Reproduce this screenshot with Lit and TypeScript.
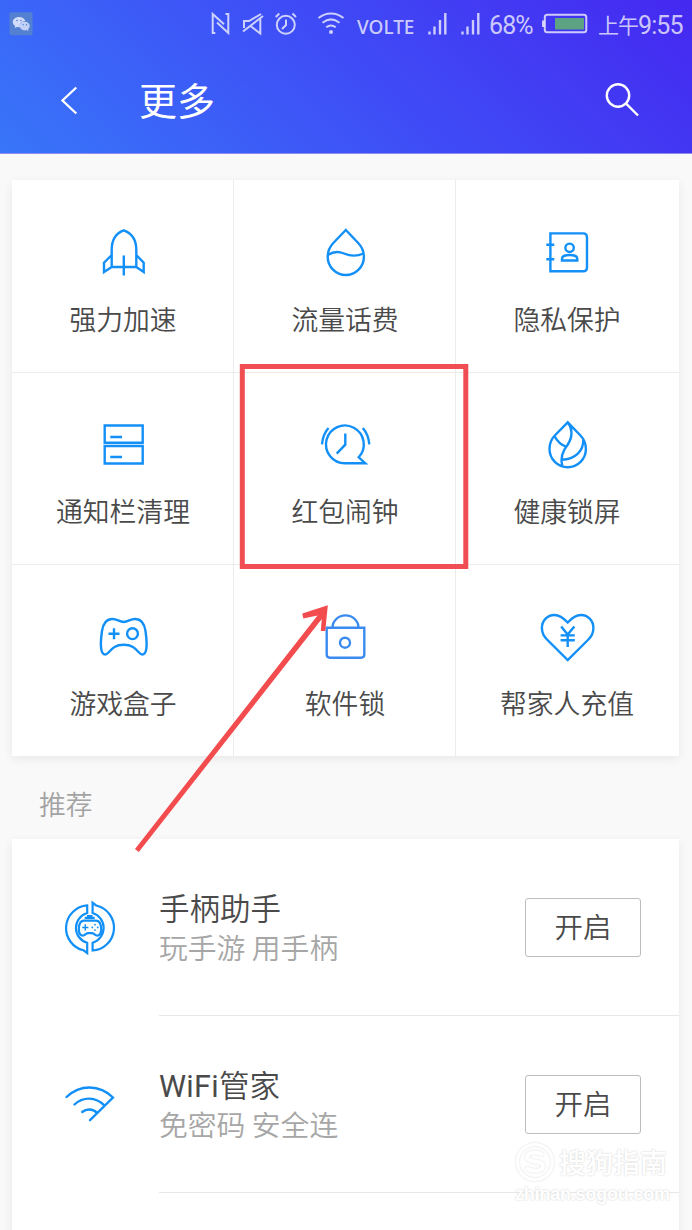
import { LitElement, html, css, svg } from "lit";
import { customElement, property } from "lit/decorators.js";

const icons: Record<string, { box: string; art: unknown }> = {
  rocket: {
    box: "93 222 60 60",
    art: svg`<path d="M111.700 267V250C111.700 240 116 233 123.700 230.300C131.500 233 136.300 240 136.300 250V267Z M123.800 255.500V275.500 M111.700 255L104 262.700V272L111.700 267 M136.300 255L143.700 262.700V272L136.300 267"/>`,
  },
  drop: {
    box: "315 222 60 60",
    art: svg`<path d="M345.800 230L333.300 243C329.500 247 327.700 251.500 327.700 256.700A18.100 18.400 0 0 0 363.900 256.700C363.900 251.500 362 247 358.200 243Z M328 255C333 251.500 338.500 251.200 344 253.500C350 256 356 256.800 363.500 253.500"/>`,
  },
  book: {
    box: "537 222 60 60",
    art: svg`<path d="M550.400 233.400H583Q587 233.400 587 237.400V267.300Q587 271.300 583 271.300H550.400Z M546.300 244.700H554.300 M546.300 259.300H554.300 M562 260.500V258.800C562 256.500 565 255 569.600 255S577.300 256.500 577.300 258.800V260.500Z"/><circle cx="569.600" cy="247.800" r="4.200"/>`,
  },
  drawers: {
    box: "93 414 60 60",
    art: svg`<path d="M104.700 425.500H142.700V442.800H104.700Z M104.700 446H142.700V463.500H104.700Z M110.300 437H122 M110.300 457H122"/>`,
  },
  alarm: {
    box: "315 414 60 60",
    art: svg`<path d="M345.300 463.300H365.300L358.700 457.300A18.900 18.900 0 1 0 345.300 463.300Z M345.300 433.500V444.700L336.700 453.700 M328.500 428Q322.800 434.500 322 444.300 M362.800 428Q368.500 434.500 369.300 444.300"/>`,
  },
  leaf: {
    box: "537 414 60 60",
    art: svg`<path d="M567.700 422.300L554.800 435.500C551 439.500 549.500 444 549.500 449A18.200 18.200 0 0 0 585.900 449C585.900 444 584.300 439.500 580.500 435.500Z M567.700 422.300C572 427.500 573.500 436 567.500 445C562 451.500 560.500 459 562.300 466.300 M554.500 436C557.500 442 561 445 566.500 446.800 M562 459.700C574.500 459.500 584 451.500 583.300 438.800"/>`,
  },
  gamepad: {
    box: "93 606 60 60",
    art: svg`<path d="M111.500 619C116.500 618.300 119 622 123.700 622S131 618.300 136 619C142 619.500 144.500 624 145.500 631C146.300 637 147 641.500 146.500 647C146 654.500 142.500 656.300 139 652.500C135 648 132 644.800 123.700 644.800S112.500 648 108.500 652.500C105 656.300 101.500 654.500 101 647C100.500 641.500 101.200 637 102 631C103 624 105.500 619.500 111.500 619Z M108.500 633.700H119.500 M114 628.200V639.200"/><circle cx="132.500" cy="633.700" r="5.400"/>`,
  },
  lock: {
    box: "315 606 60 60",
    art: svg`<path d="M326.700 627.700H364.300V654.500Q364.300 657.700 361.100 657.700H329.900Q326.700 657.700 326.700 654.500Z M332.500 627.700A13 12.300 0 0 1 358.500 627.700"/><circle cx="345" cy="642.700" r="5"/>`,
  },
  heart: {
    box: "537 606 60 60",
    art: svg`<path d="M567.700 622.500C563 617.500 559 615 554.500 615C547 615 541.900 621 541.900 628C541.900 632.500 543.500 636 547 639.500L567.700 660L588.400 639.500C592 636 593.400 632.500 593.400 628C593.400 621 588.400 615 580.800 615C576.300 615 572.400 617.500 567.700 622.500Z M561.200 626.500L567.700 634.500L574.300 626.500 M567.700 634.500V647 M560.600 635.400H574.800 M560.600 640.200H574.800"/>`,
  },
  handle: {
    box: "60 898.500 60 60",
    art: svg`<g stroke-width="2.200"><path d="M87.200 905.900V913.500A15.500 15.500 0 0 0 87.200 943.300V953.500L83.500 950.800A22.800 22.800 0 0 1 87.200 905.900Z M92.600 951V943.200A15.500 15.500 0 0 0 92.600 913.500V903.300L96.200 906A22.800 22.800 0 0 1 92.600 951Z"/><path d="M84 921.200H96C99.500 921.200 101 925 101.200 929.500C101.300 934.500 98.800 937 96 935.700C94 934.700 93.500 933.700 92 933.700H88C86.500 933.700 86 934.700 84 935.700C81.200 937 78.700 934.500 78.800 929.500C79 925 80.500 921.200 84 921.200Z"/><path stroke-width="1.500" d="M85.300 924.800V931 M82.200 927.900H88.400"/><path stroke-width="2.200" d="M84.700 918.400H94.700 M87 916.700H92.500"/></g><g fill="currentColor" stroke="none"><circle cx="95" cy="925.200" r=".9"/><circle cx="95" cy="930.600" r=".9"/><circle cx="92.300" cy="927.900" r=".9"/><circle cx="97.700" cy="927.900" r=".9"/></g>`,
  },
  wifi: {
    box: "60 1075.500 60 60",
    art: svg`<path stroke-linecap="round" d="M66.500 1097.500C80 1084.700 99.500 1084.700 113 1098L90 1120.700 M74.500 1105C83 1097 95.500 1097 104.500 1106 M82.200 1112.500C86.500 1109 92.500 1109 97 1113.300"/>`,
  },
};

const statusArt = {
  nfc: svg`<path d="M215.300 33H212.700V14L224 24.300 M217 22.500L228.300 33V14H225.500"/>`,
  mute: svg`<path d="M244 28V21H249L261 14 M250.500 26L260.300 33.500V17.500 M243 31.500L263 16"/>`,
  clock: svg`<circle cx="285.800" cy="24.800" r="9"/><path d="M286 19.500V25L282 29 M275.800 17L279.300 13.500 M296 17L292.500 13.500"/>`,
  wifi: svg`<path d="M318.500 18C326 12 336 12 343.500 18 M322.500 22.800C328 18.400 334 18.400 339.500 22.800 M326.200 27.300C329.500 24.800 332.500 24.800 335.800 27.300"/><circle cx="331" cy="32" r="2" fill="currentColor" stroke="none"/>`,
  signal: svg`<path stroke-width="2.400" d="M462.500 31.500V34.500 M467.500 26.500V34.500 M473 20V34.500 M478.300 13V34.500"/>`,
  battery: svg`<rect x="544.800" y="14.800" width="41.500" height="17.400" rx="2.500"/><path stroke-width="2.500" d="M543.200 20.500V27"/><rect x="555" y="18" width="29" height="11.500" fill="#5ca283" stroke="none"/>`,
};

@customElement("line-icon")
class LineIcon extends LitElement {
  static styles = css`
    :host { display: block; width: 60px; height: 60px; color: #1290f8; }
    :host([name="lock"]) { color: #3a8aef; }
    svg { display: block; }
  `;
  @property({ reflect: true }) name = "rocket";
  render() {
    const icon = icons[this.name];
    return html`<svg width="60" height="60" viewBox=${icon.box} fill="none" stroke="currentColor" stroke-width="2.400">${icon.art}</svg>`;
  }
}

@customElement("status-bar")
class StatusBar extends LitElement {
  static styles = css`
    :host { display: block; height: 47px; color: rgba(255, 255, 255, 0.74); font-weight: 400; }
    .bar {
      display: grid; height: 47px; align-items: start; white-space: nowrap;
      grid-template-columns: 211px 30px 33px 43px 40px 70px 33px 29px 53px 56px 1fr;
      font-family: Roboto, "Noto Sans CJK SC", sans-serif;
    }
    svg { display: block; }
    .app { padding: 12px 0 0 9px; }
    .volte { font: 500 19px/24px "Noto Sans", sans-serif; padding-top: 15px; }
    .pct { font-size: 25px; line-height: 30px; padding-top: 11px; letter-spacing: -0.9px; }
    .time { font-size: 25px; line-height: 30px; padding-top: 11px; letter-spacing: -0.9px; display: flex; }
    .cn { font-size: 21px; letter-spacing: -1px; }
  `;
  icon(art: unknown, x: number, w: number) {
    return html`<svg width=${w} height="47" viewBox="${x} 0 ${w} 47" fill="none" stroke="currentColor" stroke-width="2">${art}</svg>`;
  }
  render() {
    return html`<div class="bar">
      <div class="app">
        <svg width="24" height="24" viewBox="9 12 24 24">
          <rect x="9.500" y="12.300" width="23" height="23" rx="2" fill="#5480d2"/>
          <path d="M19 17C15.500 17 12.800 19.200 12.800 22C12.800 23.700 13.700 25 15.200 26L14.700 28L17 26.900L20 27.200C19.300 23.500 21.500 21.500 25.300 21C24.500 18.500 22 17 19 17Z" fill="#d2dcfb"/>
          <path d="M24.800 21.800C21.900 21.800 19.800 23.700 19.800 26.100S21.900 30.400 24.800 30.400L26.500 30.100L28.500 31.200L28 29.300C29.100 28.500 29.700 27.400 29.700 26.100C29.700 23.700 27.600 21.800 24.800 21.800Z" fill="#c3d0f7"/>
          <g fill="#5480d2"><circle cx="17" cy="20.500" r=".8"/><circle cx="21" cy="20.500" r=".8"/><circle cx="23.200" cy="24.800" r=".7"/><circle cx="26.500" cy="24.800" r=".7"/></g>
        </svg>
      </div>
      ${this.icon(statusArt.nfc, 211, 20)}
      ${this.icon(statusArt.mute, 241, 25)}
      ${this.icon(statusArt.clock, 274, 25)}
      ${this.icon(statusArt.wifi, 317, 29)}
      <div class="volte">VOLTE</div>
      ${this.icon(statusArt.signal, 460, 22)}
      ${this.icon(statusArt.signal, 460, 22)}
      <div class="pct">68%</div>
      ${this.icon(statusArt.battery, 542, 46)}
      <div class="time"><span class="cn">上午</span><span>9:55</span></div>
    </div>`;
  }
}

@customElement("app-root")
class AppRoot extends LitElement {
  static styles = css`
    :host {
      display: block; position: relative; width: 692px; height: 1230px; overflow: hidden;
      background: #f9f9f9; color: #4a4a4a;
      font-family: "Noto Sans CJK SC", sans-serif; font-weight: 350;
    }
    * { box-sizing: border-box; }
    header {
      height: 154px; color: #fff; border-bottom: 1px solid #8f8bf3;
      background: linear-gradient(43deg, #3876f9 0%, #3f4cf6 52%, #4528f0 100%);
    }
    .nav { display: grid; grid-template-columns: 139px 1fr 87px; height: 106px; align-items: center; }
    .nav svg { display: block; }
    .back { padding-left: 58px; }
    h1 { margin: -2px 0 0; font-size: 38px; line-height: 50px; font-weight: 400; }
    .grid {
      display: grid; grid-template-columns: 222px 222px 223px; grid-template-rows: 193px 192px 191px;
      width: 667px; margin: 26px 0 0 12px; background: #fff;
      box-shadow: 0 3px 10px rgba(0, 0, 0, 0.07);
    }
    .cell {
      display: flex; flex-direction: column; align-items: center; padding-top: 42px;
      border-right: 1px solid #ececec; border-bottom: 1px solid #ececec; padding-left: 1px;
    }
    .cell:nth-child(3n) { border-right: 0; padding: 42px 1px 0 0; }
    .cell:nth-child(n + 4) { padding-top: 41px; }
    .cell:nth-child(n + 7) { border-bottom: 0; }
    .label { font-size: 26.800px; line-height: 36px; margin-top: 19px; white-space: nowrap; }
    .section { height: 83px; padding: 30px 0 0 39px; font-size: 26.800px; line-height: 36px; color: #a3a3a3; }
    .list { width: 667px; height: 400px; margin-left: 12px; background: #fff; box-shadow: 0 3px 10px rgba(0, 0, 0, 0.07); }
    .row { display: grid; grid-template-columns: 147px 1fr; height: 177px; }
    .row line-icon { margin: 59px 0 0 48px; }
    .body { display: flex; justify-content: space-between; border-bottom: 1px solid #e8e8e8; padding: 48px 38px 0 0; }
    .name { height: 40px; font-size: 30.500px; line-height: 40px; }
    .latin { font-family: Roboto, sans-serif; font-weight: 400; line-height: 1; letter-spacing: 0.3px; }
    .note { font-size: 28.800px; line-height: 40px; color: #a6a6a6; white-space: nowrap; }
    button {
      width: 116px; height: 59px; margin: 11px 0 0; padding: 0 0 4px; border: 1px solid #bdbdbd; border-radius: 3px;
      background: #fff; color: #4a4a4a; font: inherit; font-size: 28.500px; line-height: 53px;
    }
    .marks { position: absolute; left: 0; top: 0; pointer-events: none; }
    .brand {
      position: absolute; left: 515px; top: 1142px; display: grid; grid-template-columns: 44px auto;
      color: #fff; white-space: nowrap; text-shadow: 0 0 2px #ddd, 0 0 2px #e2e2e2;
    }
    .brand svg { display: block; filter: drop-shadow(0 0 1px #ddd); }
    .brand .cn { font-size: 27px; line-height: 40px; font-weight: 500; }
    .brand .url { grid-column: 1 / 3; font: 700 18px/24px "Liberation Sans", sans-serif; letter-spacing: -0.2px; }
  `;
  cells = [
    ["rocket", "强力加速"], ["drop", "流量话费"], ["book", "隐私保护"],
    ["drawers", "通知栏清理"], ["alarm", "红包闹钟"], ["leaf", "健康锁屏"],
    ["gamepad", "游戏盒子"], ["lock", "软件锁"], ["heart", "帮家人充值"],
  ];
  rows = [
    ["handle", "", "手柄助手", "玩手游 用手柄"],
    ["wifi", "WiFi", "管家", "免密码 安全连"],
  ];
  render() {
    return html`
      <header>
        <status-bar></status-bar>
        <div class="nav">
          <div class="back"><svg width="24" height="32" viewBox="58 84 24 32" fill="none" stroke="#fff" stroke-width="2.300"><path d="M76.300 87.500L62.500 100.500L76.300 113.500"/></svg></div>
          <h1>更多</h1>
          <svg width="36" height="36" viewBox="605 82 36 36" fill="none" stroke="#fff" stroke-width="2.400"><circle cx="618" cy="95.500" r="11.200"/><path d="M626 103.500L638 115.500"/></svg>
        </div>
      </header>
      <div class="grid">
        ${this.cells.map(([icon, label]) => html`<div class="cell"><line-icon name=${icon}></line-icon><div class="label">${label}</div></div>`)}
      </div>
      <div class="section">推荐</div>
      <div class="list">
        ${this.rows.map(([icon, latin, name, note]) => html`<div class="row">
          <line-icon name=${icon}></line-icon>
          <div class="body"><div><div class="name">${latin ? html`<span class="latin">${latin}</span>` : ""}${name}</div><div class="note">${note}</div></div><button>开启</button></div>
        </div>`)}
      </div>
      <div class="brand">
        <svg width="40" height="40" viewBox="0 0 40 40" fill="none" stroke="#fff"><circle cx="20" cy="20" r="17.500" stroke-width="3"/><path stroke-width="4" d="M28 13C22 9 12 10 12 15C12 21 28 18 28 24C28 30 17 30 11 26"/></svg>
        <div class="cn">搜狗指南</div>
        <div class="url">zhinan.sogou.com</div>
      </div>
      <svg class="marks" width="692" height="1230" viewBox="0 0 692 1230">
        <rect x="242.300" y="366.500" width="223.500" height="200" fill="none" stroke="#f04e52" stroke-width="5"/>
        <path fill="#f34c4e" d="M135 849L317.500 615.500L303.300 618.500L302.300 613.500L327.800 605.300L325.300 631H320.800L321.800 619L138.800 851.900Z"/>
      </svg>
    `;
  }
}
